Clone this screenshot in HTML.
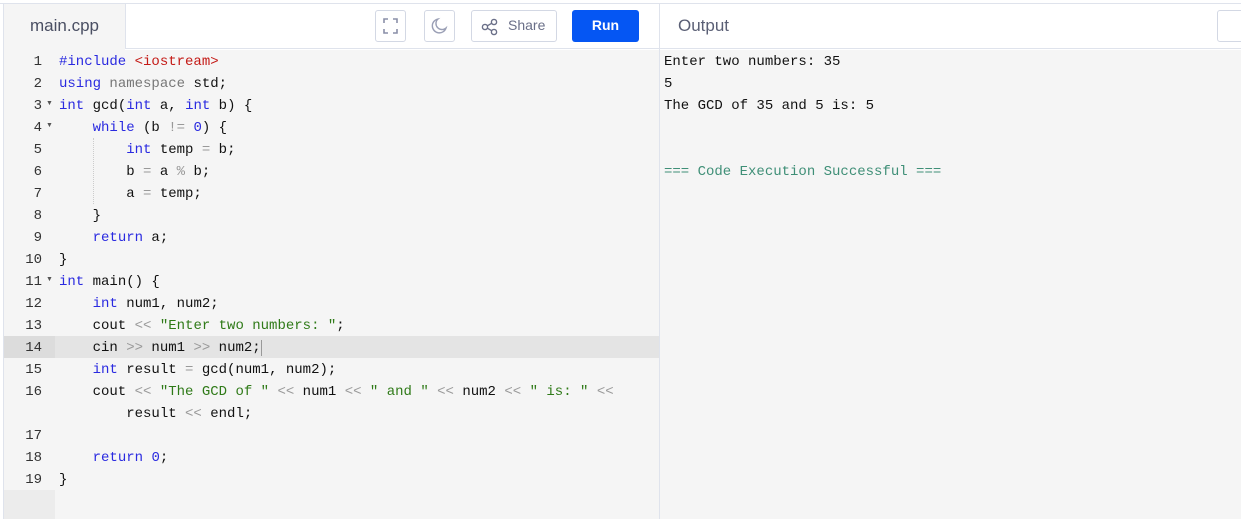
<!DOCTYPE html>
<html><head><meta charset="utf-8"><style>
*{margin:0;padding:0;box-sizing:border-box}
body{width:1241px;height:519px;background:#fff;position:relative;overflow:hidden;font-family:"Liberation Sans",sans-serif}
.topline{position:absolute;left:0;top:3px;width:1241px;height:1px;background:#dfe3ec}
.leftline{position:absolute;left:3px;top:3px;width:1px;height:516px;background:#dfe3ec}
.tab{position:absolute;left:4px;top:4px;width:121px;height:46px;background:#f5f5f5;color:#4a4f63;font-size:17px;line-height:44px;padding-left:26px}
.hdr{position:absolute;left:125px;top:4px;width:534px;height:45px;border-bottom:1px solid #dfe3ec;border-left:1px solid #dfe3ec}
.ohdr{position:absolute;left:660px;top:4px;width:581px;height:45px;border-bottom:1px solid #dfe3ec}
.btn{position:absolute;top:10px;height:32px;border:1px solid #d3d8e4;border-radius:3px;background:#fff}
.run{position:absolute;left:572px;top:10px;width:67px;height:32px;background:#0556f3;border-radius:3px;color:#fff;font-weight:bold;font-size:14px;text-align:center;line-height:31px}
.ed{position:absolute;left:4px;top:50px;width:655px;height:469px;background:#f5f5f5}
.gut{position:absolute;left:4px;top:490px;width:51px;height:29px;background:#ececec}
.hl{position:absolute;left:4px;top:336px;width:655px;height:22px;background:#e4e4e4}
.hlg{position:absolute;left:4px;top:336px;width:51px;height:22px;background:#dcdcdc}
.vdiv{position:absolute;left:659px;top:4px;width:1px;height:515px;background:#dfe3ec}
.out{position:absolute;left:660px;top:50px;width:581px;height:469px;background:#f5f5f5}
pre{font-family:"Liberation Mono",monospace;font-size:14px;line-height:22px;position:absolute}
.ln{left:4px;top:51px;width:38px;text-align:right;color:#333}
.code{left:59px;top:51px;color:#111}
.k{color:#2a2ae0}.s{color:#2f7a18}.i{color:#c41a16}.o{color:#999}.g{color:#777}
.fold{position:absolute;left:46px;font-size:7px;color:#555}
.guide{position:absolute;left:93px;top:138px;width:0;height:66px;border-left:1px dotted #ccc}
.o1{left:664px;top:51px;color:#111}
.succ{color:#3f8f77}
</style></head><body>
<div class="ed"></div><div class="gut"></div>
<div class="hl"></div><div class="hlg"></div>
<div class="out"></div>
<div class="topline"></div><div class="leftline"></div>
<div class="tab">main.cpp</div>
<div class="hdr"></div>
<div class="ohdr"><span style="position:absolute;left:18px;top:12px;font-size:17px;color:#5a5f75">Output</span></div>
<div class="btn" style="left:1217px;width:40px"></div>
<div class="vdiv"></div>
<div class="btn" style="left:375px;width:31px"><svg width="29" height="30" viewBox="0 0 29 30"><path d="M8 12V8h4M17 8h4v4M21 18v4h-4M12 22H8v-4" fill="none" stroke="#8a8fa8" stroke-width="1.6"/></svg></div>
<div class="btn" style="left:424px;width:31px"><svg width="29" height="30" viewBox="0 0 29 30"><path d="M13 8a7 7 0 1 0 8 9a6 6 0 0 1-8-9z" fill="none" stroke="#9a9fb5" stroke-width="1.4"/></svg></div>
<div class="btn" style="left:471px;width:86px"><svg style="position:absolute;left:8px;top:6px" width="20" height="20" viewBox="0 0 20 20"><circle cx="5" cy="10" r="2.6" fill="none" stroke="#6a6f88" stroke-width="1.4"/><circle cx="14" cy="5" r="2.6" fill="none" stroke="#6a6f88" stroke-width="1.4"/><circle cx="14" cy="15" r="2.6" fill="none" stroke="#6a6f88" stroke-width="1.4"/><path d="M7.3 8.8l4.4-2.5M7.3 11.2l4.4 2.5" stroke="#6a6f88" stroke-width="1.4"/></svg><span style="position:absolute;left:36px;top:6px;font-size:14px;color:#6a6f88">Share</span></div>
<div class="run">Run</div>
<div class="guide"></div>
<span class="fold" style="top:100px">▼</span><span class="fold" style="top:122px">▼</span><span class="fold" style="top:276px">▼</span>
<pre class="ln">1
2
3
4
5
6
7
8
9
10
11
12
13
14
15
16

17
18
19</pre>
<pre class="code"><span class="k">#include</span> <span class="i">&lt;iostream&gt;</span>
<span class="k">using</span> <span class="g">namespace</span> std;
<span class="k">int</span> gcd(<span class="k">int</span> a, <span class="k">int</span> b) {
    <span class="k">while</span> (b <span class="o">!=</span> <span class="k">0</span>) {
        <span class="k">int</span> temp <span class="o">=</span> b;
        b <span class="o">=</span> a <span class="o">%</span> b;
        a <span class="o">=</span> temp;
    }
    <span class="k">return</span> a;
}
<span class="k">int</span> main() {
    <span class="k">int</span> num1, num2;
    cout <span class="o">&lt;&lt;</span> <span class="s">"Enter two numbers: "</span>;
    cin <span class="o">&gt;&gt;</span> num1 <span class="o">&gt;&gt;</span> num2;<span style="border-left:1px solid #999"></span>
    <span class="k">int</span> result <span class="o">=</span> gcd(num1, num2);
    cout <span class="o">&lt;&lt;</span> <span class="s">"The GCD of "</span> <span class="o">&lt;&lt;</span> num1 <span class="o">&lt;&lt;</span> <span class="s">" and "</span> <span class="o">&lt;&lt;</span> num2 <span class="o">&lt;&lt;</span> <span class="s">" is: "</span> <span class="o">&lt;&lt;</span>
        result <span class="o">&lt;&lt;</span> endl;

    <span class="k">return</span> <span class="k">0</span>;
}</pre>
<pre class="o1">Enter two numbers: 35
5
The GCD of 35 and 5 is: 5


<span class="succ">=== Code Execution Successful ===</span></pre>
</body></html>
